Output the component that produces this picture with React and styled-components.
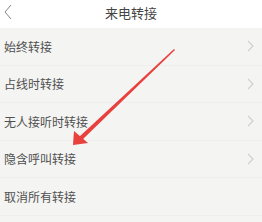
import React from 'react';
import styled, { createGlobalStyle } from 'styled-components';

const Global = createGlobalStyle`
  html, body { margin: 0; padding: 0; background: #f4f4f2; }
  body { font-family: "Noto Sans CJK SC", "Noto Sans", sans-serif; }
`;

const Screen = styled.div`
  position: relative;
  width: 262px;
  height: 222px;
  overflow: hidden;
  background: #f4f4f2;
`;

const Header = styled.div`
  height: 28px;
  box-sizing: border-box;
  padding-bottom: 4px;
  background: #ffffff;
  display: flex;
  align-items: center;
  justify-content: center;
  position: relative;
`;

const Title = styled.div`
  font-size: 13px;
  color: #444;
  line-height: 1;
`;

const Back = styled.svg`
  position: absolute;
  left: 3px;
  top: 4px;
`;

const List = styled.div`
  display: flex;
  flex-direction: column;
`;

const Row = styled.div`
  height: 37.5px;
  box-sizing: border-box;
  display: flex;
  align-items: center;
  justify-content: space-between;
  padding: 0 8px 0 4px;
  border-bottom: 1px solid #eeeeec;
`;

const Label = styled.span`
  font-size: 12px;
  color: #505050;
`;

const Arrow = styled.svg`
  position: absolute;
  left: 0;
  top: 0;
  pointer-events: none;
`;

const Chevron = () => (
  <svg width="7" height="12" viewBox="0 0 7 12">
    <path d="M1 1 L6 6 L1 11" fill="none" stroke="#cfcfcf" strokeWidth="1.1" />
  </svg>
);

const items = [
  { label: '始终转接', more: true },
  { label: '占线时转接', more: true },
  { label: '无人接听时转接', more: true },
  { label: '隐含呼叫转接', more: true },
  { label: '取消所有转接', more: false },
];

export default function App() {
  return (
    <Screen>
      <Global />
      <Header>
        <Back width="10" height="16" viewBox="0 0 10 16">
          <path d="M8 1 L2 8 L8 15" fill="none" stroke="#888" strokeWidth="1" />
        </Back>
        <Title>来电转接</Title>
      </Header>
      <List>
        {items.map((it) => (
          <Row key={it.label}>
            <Label>{it.label}</Label>
            {it.more && <Chevron />}
          </Row>
        ))}
      </List>
      <Arrow width="262" height="222" viewBox="0 0 262 222">
        <polygon points="174,49 175,50 82,140 79,137" fill="#e8403c" />
        <polygon points="73,145 74,131 88,143" fill="#e8403c" />
      </Arrow>
    </Screen>
  );
}
